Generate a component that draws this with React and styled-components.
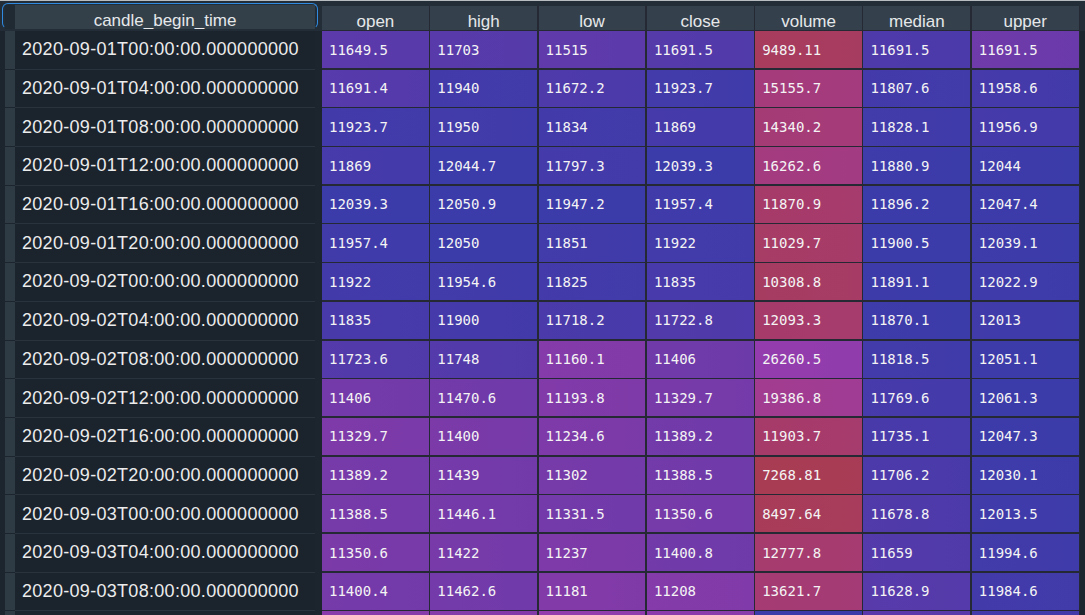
import React from "react";
import styled, { createGlobalStyle } from "styled-components";

const Global = createGlobalStyle`
  html, body { margin: 0; padding: 0; background: #1c252e; }
  body { overflow: hidden; }
`;

const COLS = ["open", "high", "low", "close", "volume", "median", "upper"];

const ROWS = [
  ["2020-09-01T00:00:00.000000000", "11649.5", "11703", "11515", "11691.5", "9489.11", "11691.5", "11691.5"],
  ["2020-09-01T04:00:00.000000000", "11691.4", "11940", "11672.2", "11923.7", "15155.7", "11807.6", "11958.6"],
  ["2020-09-01T08:00:00.000000000", "11923.7", "11950", "11834", "11869", "14340.2", "11828.1", "11956.9"],
  ["2020-09-01T12:00:00.000000000", "11869", "12044.7", "11797.3", "12039.3", "16262.6", "11880.9", "12044"],
  ["2020-09-01T16:00:00.000000000", "12039.3", "12050.9", "11947.2", "11957.4", "11870.9", "11896.2", "12047.4"],
  ["2020-09-01T20:00:00.000000000", "11957.4", "12050", "11851", "11922", "11029.7", "11900.5", "12039.1"],
  ["2020-09-02T00:00:00.000000000", "11922", "11954.6", "11825", "11835", "10308.8", "11891.1", "12022.9"],
  ["2020-09-02T04:00:00.000000000", "11835", "11900", "11718.2", "11722.8", "12093.3", "11870.1", "12013"],
  ["2020-09-02T08:00:00.000000000", "11723.6", "11748", "11160.1", "11406", "26260.5", "11818.5", "12051.1"],
  ["2020-09-02T12:00:00.000000000", "11406", "11470.6", "11193.8", "11329.7", "19386.8", "11769.6", "12061.3"],
  ["2020-09-02T16:00:00.000000000", "11329.7", "11400", "11234.6", "11389.2", "11903.7", "11735.1", "12047.3"],
  ["2020-09-02T20:00:00.000000000", "11389.2", "11439", "11302", "11388.5", "7268.81", "11706.2", "12030.1"],
  ["2020-09-03T00:00:00.000000000", "11388.5", "11446.1", "11331.5", "11350.6", "8497.64", "11678.8", "12013.5"],
  ["2020-09-03T04:00:00.000000000", "11350.6", "11422", "11237", "11400.8", "12777.8", "11659", "11994.6"],
  ["2020-09-03T08:00:00.000000000", "11400.4", "11462.6", "11181", "11208", "13621.7", "11628.9", "11984.6"],
];

// partially visible next row: colours only, its text lies below the window
const NEXT_ROW = ["11208", "11290", "11010", "11120", "45000", "11590", "11975.2"];

// value range -> colormap position for each column
const RANGES = {
  open: [11250, 12040, 0.58, 1],
  high: [11300, 12050, 0.58, 1],
  low: [11160, 11947, 0.58, 1],
  close: [11200, 12040, 0.58, 1],
  volume: [7268, 26260, 0, 0.5],
  median: [11300, 11900, 0.58, 1],
  upper: [11550, 12061, 0.58, 1],
};

const STOPS = [
  [0.0, [168, 60, 82]],
  [0.2, [165, 59, 120]],
  [0.35, [160, 60, 150]],
  [0.5, [148, 60, 174]],
  [0.62, [126, 58, 168]],
  [0.75, [100, 58, 171]],
  [0.88, [74, 58, 170]],
  [1.0, [60, 59, 170]],
];

function cmap(t) {
  const x = Math.max(0, Math.min(1, t));
  for (let i = 0; i < STOPS.length - 1; i++) {
    const [t0, c0] = STOPS[i];
    const [t1, c1] = STOPS[i + 1];
    if (x >= t0 && x <= t1) {
      const f = (x - t0) / (t1 - t0);
      const c = c0.map((v, k) => Math.round(v + (c1[k] - v) * f));
      return `rgb(${c[0]}, ${c[1]}, ${c[2]})`;
    }
  }
  const c = STOPS[STOPS.length - 1][1];
  return `rgb(${c[0]}, ${c[1]}, ${c[2]})`;
}

function position(col, value) {
  const [lo, hi, t0, t1] = RANGES[col];
  const n = (parseFloat(value) - lo) / (hi - lo);
  return t0 + (t1 - t0) * n;
}

const Page = styled.div`
  width: 1085px;
  height: 615px;
  overflow: hidden;
  background: #1c252e;
  display: flex;
  flex-direction: column;
`;

const TopLine = styled.div`
  height: 1px;
  flex: none;
  background: #b8bdc2;
`;

const Body = styled.div`
  display: flex;
  align-items: flex-start;
  background: linear-gradient(#222d37 0, #222d37 30px, #1c252e 30px);
  flex: 1;
`;

const LeftPanel = styled.div`
  width: 317px;
  flex: none;
  padding-top: 4px;
  display: flex;
  flex-direction: column;
`;

const LeftHeader = styled.div`
  position: relative;
  display: flex;
  height: 24px;
  padding-left: 5px;
  margin-bottom: 2px;
`;

const FocusRing = styled.div`
  position: absolute;
  left: 2px;
  top: -2.5px;
  width: 316px;
  height: 26px;
  box-sizing: border-box;
  border: 1.5px solid #2f8ae0;
  border-bottom-color: transparent;
  border-radius: 6px;
  pointer-events: none;
`;

const IndexHead = styled.div`
  width: 10px;
  background: #1f2a33;
`;

const HeadText = styled.div`
  box-sizing: border-box;
  overflow: hidden;
  padding-top: 6px;
  text-align: center;
  font-family: "Liberation Sans", Arial, sans-serif;
  font-size: 17px;
  line-height: 19.5px;
  color: #e6e8ea;
  background: #33404a;
  white-space: nowrap;
`;

const TimeHead = styled(HeadText)`
  width: 300px;
`;

const LeftRow = styled.div`
  display: flex;
  height: 38.7px;
  box-sizing: border-box;
  padding-left: 5px;
`;

const IndexCell = styled.div`
  width: 10px;
  background: #2e3a44;
  border-bottom: 1.5px solid #1c252e;
  box-sizing: border-box;
`;

const TimeCell = styled.div`
  width: 300px;
  box-sizing: border-box;
  border-bottom: 1px solid #29333d;
  padding-left: 7px;
  display: flex;
  align-items: center;
  background: #1b232c;
  font-family: "Liberation Sans", Arial, sans-serif;
  font-size: 18px;
  letter-spacing: 0.3px;
  color: #ececec;
  white-space: nowrap;
`;

const DataGrid = styled.div`
  margin-left: 5px;
  margin-top: 5px;
  display: grid;
  grid-template-columns: repeat(7, 106.8px);
  grid-template-rows: 23.5px;
  grid-auto-rows: 37.2px;
  gap: 1.5px;
  padding-right: 1.5px;
  background: #242934;
`;

const ColHead = styled(HeadText)`
  background: #34414c;
`;

const DataCell = styled.div`
  display: flex;
  align-items: center;
  padding-left: 7px;
  font-family: "DejaVu Sans Mono", "Liberation Mono", monospace;
  font-size: 14px;
  color: #f4f4f4;
  white-space: nowrap;
  overflow: hidden;
  background: linear-gradient(90deg, ${(p) => p.$c1}, ${(p) => p.$c2});
`;

function Cell({ col, value, showText = true }) {
  const t = position(col, value);
  return (
    <DataCell $c1={cmap(t)} $c2={cmap(t + 0.02)}>
      {showText ? value : null}
    </DataCell>
  );
}

export default function App() {
  return (
    <Page>
      <Global />
      <TopLine />
      <Body>
        <LeftPanel>
          <LeftHeader>
            <IndexHead />
            <TimeHead>candle_begin_time</TimeHead>
            <FocusRing />
          </LeftHeader>
          {ROWS.map((r) => (
            <LeftRow key={r[0]}>
              <IndexCell />
              <TimeCell>{r[0]}</TimeCell>
            </LeftRow>
          ))}
          <LeftRow>
            <IndexCell />
            <TimeCell />
          </LeftRow>
        </LeftPanel>
        <DataGrid>
          {COLS.map((c) => (
            <ColHead key={c}>{c}</ColHead>
          ))}
          {ROWS.map((r) =>
            COLS.map((c, i) => <Cell key={r[0] + c} col={c} value={r[i + 1]} />)
          )}
          {COLS.map((c, i) => (
            <Cell key={"next" + c} col={c} value={NEXT_ROW[i]} showText={false} />
          ))}
        </DataGrid>
      </Body>
    </Page>
  );
}
